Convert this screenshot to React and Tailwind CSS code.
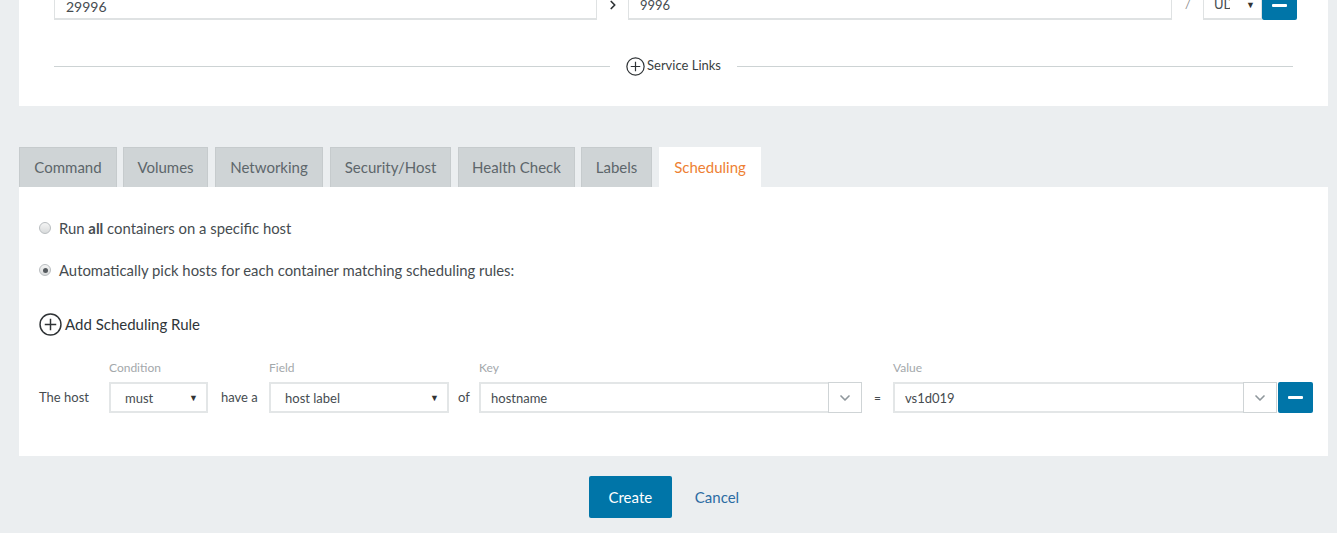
import React from 'react';
import { ChevronRight, ChevronDown } from 'lucide-react';

const tabs = [
  { label: 'Command', cls: 'w-[98px]' },
  { label: 'Volumes', cls: 'w-[85px] ml-[6px]' },
  { label: 'Networking', cls: 'w-[108px] ml-[7px]' },
  { label: 'Security/Host', cls: 'w-[121px] ml-[7px]' },
  { label: 'Health Check', cls: 'w-[117px] ml-[7px]' },
  { label: 'Labels', cls: 'w-[71px] ml-[6px]' },
];

const PlusCircle = ({ size }) => (
  <svg width={size} height={size} viewBox="0 0 22 22" fill="none" stroke="#2f3336" strokeWidth="1.4">
    <circle cx="11" cy="11" r="10" />
    <path d="M11 5.5v11M5.5 11h11" />
  </svg>
);

const Radio = ({ checked }) => (
  <span className="w-[12px] h-[12px] rounded-full border border-[#b9bdc0] bg-gradient-to-b from-[#f4f4f4] to-[#d9dbdc] flex items-center justify-center shrink-0">
    {checked && <span className="w-[5px] h-[5px] rounded-full bg-[#555a5e]" />}
  </span>
);

const Caret = () => <span className="text-[9px] text-[#333]">▼</span>;

const MinusBtn = ({ w }) => (
  <div className={`${w} h-full bg-[#0075a8] rounded-[2px] flex items-center justify-center`}>
    <span className="w-[15px] h-[3px] bg-white rounded-[1px]" />
  </div>
);

const Field = ({ label, children, w }) => (
  <div className={`flex flex-col ${w}`}>
    <span className="text-[12px] text-[#a3a8ab] h-[21px] leading-[14px]">{label}</span>
    <div className="h-[31px] flex">{children}</div>
  </div>
);

export default function App() {
  return (
    <div className="h-[533px] overflow-hidden bg-[#ebeef0] text-[#464c50]" style={{ fontFamily: 'Lato, "Open Sans", sans-serif' }}>
      {/* top panel, scrolled */}
      <div className="ml-[19px] w-[1309px] bg-white -mt-[30px] pt-[20px] pb-[30px]">
        <div className="flex items-center pl-[35px] h-[30px]">
          <div className="w-[543px] h-full border border-[#dfe2e3] border-b-2 flex items-center pt-[3px] px-[11px] text-[14px]">29996</div>
          <div className="w-[31px] flex justify-center"><ChevronRight size={14} strokeWidth={3} color="#2f3336" /></div>
          <div className="w-[544px] h-full border border-[#dfe2e3] border-b-2 flex items-center pt-[3px] px-[11px] text-[13px]">9996</div>
          <div className="w-[31px] flex justify-start pl-[13px] text-[12px] text-[#888]">/</div>
          <div className="w-[59px] h-full border border-[#dfe2e3] border-b-2 flex items-center justify-between pl-[10px] pr-[6px] text-[13px]">
            <span className="w-[16px] overflow-hidden whitespace-nowrap">UDP</span><Caret />
          </div>
          <MinusBtn w="w-[35px]" />
        </div>
        <div className="flex items-center px-[35px] mt-[36px] h-[20px]">
          <div className="flex-1 h-px bg-[#cdd3d4]" />
          <div className="flex items-center px-[16px] gap-[2px] text-[13px] text-[#3a3f42]">
            <PlusCircle size={19} />
            <span>Service Links</span>
          </div>
          <div className="flex-1 h-px bg-[#cdd3d4]" />
        </div>
      </div>

      {/* tabs */}
      <div className="ml-[19px] mt-[41px] flex items-end">
        {tabs.map((t) => (
          <div key={t.label} className={`${t.cls} h-[40px] bg-[#cfd4d6] border border-[#c6cbcd] border-b-0 flex items-center justify-center text-[15px] text-[#5d666b]`}>
            {t.label}
          </div>
        ))}
        <div className="w-[102px] ml-[7px] h-[40px] bg-white flex items-center justify-center text-[15px] text-[#ee7f33]">Scheduling</div>
      </div>

      {/* tab content */}
      <div className="ml-[19px] w-[1309px] h-[269px] bg-white pt-[33px]">
        <div className="flex items-center gap-[8px] pl-[20px] h-[16px] text-[14.85px]">
          <Radio />
          <span>Run <b className="font-bold">all</b> containers on a specific host</span>
        </div>
        <div className="flex items-center gap-[8px] pl-[20px] h-[16px] mt-[26px] text-[14.85px]">
          <Radio checked />
          <span>Automatically pick hosts for each container matching scheduling rules:</span>
        </div>
        <div className="flex items-center gap-[3px] pl-[20px] mt-[34px] h-[24px] text-[15px] text-[#2f3538]">
          <PlusCircle size={23} />
          <span>Add Scheduling Rule</span>
        </div>

        <div className="flex items-end pl-[20px] mt-[25px] text-[13px]">
          <div className="w-[70px] h-[31px] flex items-center">The host</div>
          <Field label="Condition" w="w-[99px]">
            <div className="w-full h-full border-2 border-[#e3e6e7] flex items-center justify-between pl-[14px] pr-[8px]">
              <span className="mt-[2px]">must</span><Caret />
            </div>
          </Field>
          <div className="w-[61px] h-[31px] flex items-center pl-[13px]">have a</div>
          <Field label="Field" w="w-[180px]">
            <div className="w-full h-full border-2 border-[#e3e6e7] flex items-center justify-between pl-[14px] pr-[8px]">
              <span className="mt-[2px]">host label</span><Caret />
            </div>
          </Field>
          <div className="w-[30px] h-[31px] flex items-center justify-center">of</div>
          <Field label="Key" w="w-[383px]">
            <div className="flex-1 h-full border-2 border-r-0 border-[#e3e6e7] flex items-center pl-[10px]">
              <span className="mt-[2px]">hostname</span>
            </div>
            <div className="w-[34px] h-full border border-[#cfd4d6] flex items-center justify-center">
              <ChevronDown size={16} strokeWidth={2.5} color="#8f979c" />
            </div>
          </Field>
          <div className="w-[31px] h-[31px] flex items-center justify-center text-[12px]">=</div>
          <Field label="Value" w="w-[384px]">
            <div className="flex-1 h-full border-2 border-r-0 border-[#e3e6e7] flex items-center pl-[10px]">
              <span className="mt-[2px]">vs1d019</span>
            </div>
            <div className="w-[34px] h-full border border-[#cfd4d6] flex items-center justify-center">
              <ChevronDown size={16} strokeWidth={2.5} color="#8f979c" />
            </div>
          </Field>
          <div className="w-px" />
          <div className="h-[31px]"><MinusBtn w="w-[35px]" /></div>
        </div>
      </div>

      {/* footer */}
      <div className="ml-[19px] w-[1309px] flex justify-center mt-[20px] pl-[4px]">
        <div className="h-[42px] w-[83px] bg-[#0075a8] rounded-[2px] flex items-center justify-center text-white text-[15px]">Create</div>
        <div className="h-[42px] px-[23px] flex items-center text-[#2b6ca3] text-[15px]">Cancel</div>
      </div>
    </div>
  );
}
